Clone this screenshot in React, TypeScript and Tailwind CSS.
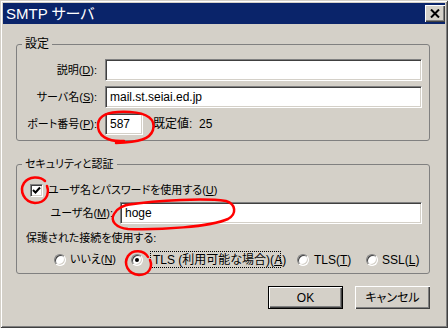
import type { ReactNode } from 'react'

const font = "font-['Liberation_Sans','Noto_Sans_CJK_JP',sans-serif] [font-feature-settings:'palt']"
const sunken =
  'border border-t-[#808080] border-l-[#808080] border-b-white border-r-white shadow-[inset_1px_1px_#404040,inset_-1px_-1px_#d4d0c8]'

function Key({ children }: { children: ReactNode }) {
  return <u className="underline underline-offset-[1px]">{children}</u>
}

function TextBox({ value, className = '' }: { value?: string; className?: string }) {
  return (
    <div className={`h-[22px] bg-white ${sunken} flex items-center pl-[4px] text-[12px] text-black ${className}`}>
      {value}
    </div>
  )
}

function Radio({ checked }: { checked?: boolean }) {
  return (
    <span className="relative w-[12px] h-[12px] rounded-full bg-white border border-t-[#808080] border-l-[#808080] border-b-white border-r-white shadow-[inset_1px_1px_#404040,inset_-1px_-1px_#d4d0c8] shrink-0 flex items-center justify-center">
      {checked && <span className="w-[4px] h-[4px] rounded-full bg-black" />}
    </span>
  )
}

function Btn({ children, primary }: { children: ReactNode; primary?: boolean }) {
  return (
    <button
      className={`w-[75px] h-[23px] bg-[#d4d0c8] text-[12px] text-black flex items-center justify-center ${
        primary
          ? 'border border-black shadow-[inset_1px_1px_#fff,inset_-1px_-1px_#404040,inset_-2px_-2px_#808080]'
          : 'shadow-[inset_1px_1px_#fff,inset_-1px_-1px_#404040,inset_-2px_-2px_#808080]'
      }`}
    >
      {children}
    </button>
  )
}

function Annotations() {
  return (
    <svg className="absolute inset-0 pointer-events-none" width="448" height="328" viewBox="0 0 448 328" fill="none">
      <g stroke="#ff0000" strokeWidth="2.5" strokeLinecap="round">
        <path d="M124 141 C108 142 97 136 98 124 C99 114 112 111 130 112 C147 113 156 119 153 130 C150 139 140 142 116 143" />
        <path d="M45 181 C40 176 29 176 24 183 C19 191 24 202 35 203 C45 203 50 195 47 186" />
        <path d="M126 205 C160 200 205 198 226 201 C236 204 237 214 228 219 C210 227 160 230 128 229 C116 228 110 221 114 214 C117 208 124 205 132 204" />
        <path d="M148 257 C144 250 133 249 128 256 C123 264 128 274 139 275 C149 275 153 267 150 260" />
      </g>
    </svg>
  )
}

export default function App() {
  return (
    <div
      className={`relative w-[448px] h-[328px] bg-[#d4d0c8] p-[3px] shadow-[inset_1px_1px_#d4d0c8,inset_-1px_-1px_#404040,inset_2px_2px_#fff,inset_-2px_-2px_#808080] ${font} text-black whitespace-nowrap`}
    >
      <div className="h-[21px] bg-[#0a246a] flex items-center justify-between pl-[3px]">
        <span className="text-white text-[15px] leading-none">SMTP サーバ</span>
        <button className="w-[20px] h-[17px] bg-[#d4d0c8] shadow-[inset_1px_1px_#fff,inset_-1px_-1px_#404040,inset_-2px_-2px_#808080] flex items-center justify-center">
          <svg width="10" height="9" viewBox="0 0 10 9">
            <path d="M1 0.5 L9 8.5 M9 0.5 L1 8.5" stroke="#000" strokeWidth="2" />
          </svg>
        </button>
      </div>

      <fieldset className="ml-[13px] mt-[13px] w-[414px] border border-[#808080] rounded-[3px] pr-[7px] pb-[5px] text-[11px]">
        <legend className="ml-[5px] px-[3px] text-[12px] leading-[14px]">設定</legend>
        <div className="grid grid-cols-[80px_1fr] gap-x-[8px] gap-y-[5px] pt-[8px]">
          <div className="flex items-center justify-end">
            説明(<Key>D</Key>):
          </div>
          <TextBox />
          <div className="flex items-center justify-end">
            サーバ名(<Key>S</Key>):
          </div>
          <TextBox value="mail.st.seiai.ed.jp" />
          <div className="flex items-center justify-end">
            ポート番号(<Key>P</Key>):
          </div>
          <div className="flex items-center gap-[10px]">
            <TextBox value="587" className="w-[38px]" />
            <span className="text-[12px]">既定値:&nbsp; 25</span>
          </div>
        </div>
      </fieldset>

      <fieldset className="ml-[13px] mt-[16px] w-[414px] border border-[#808080] rounded-[3px] pr-[7px] pb-[5px] text-[11px]">
        <legend className="ml-[5px] px-[3px] leading-[14px]">セキュリティと認証</legend>
        <div className="flex items-center h-[16px] mt-[11px] pl-[13px] gap-[5px]">
          <span className={`w-[13px] h-[13px] bg-white ${sunken} flex items-center justify-center shrink-0`}>
            <svg width="9" height="9" viewBox="0 0 9 9">
              <path d="M1 4 L3.5 6.5 L8 1.5" stroke="#000" strokeWidth="2" fill="none" />
            </svg>
          </span>
          <span>
            ユーザ名とパスワードを使用する(<Key>U</Key>)
          </span>
        </div>
        <div className="flex items-center mt-[4px]">
          <span className="w-[103px] text-right pr-[7px]">
            ユーザ名(<Key>M</Key>):
          </span>
          <TextBox value="hoge" className="flex-1" />
        </div>
        <div className="mt-[7px] ml-[9px] h-[14px] leading-[14px]">保護された接続を使用する:</div>
        <div className="flex items-center h-[17px] mt-[6px] pl-[37px]">
          <div className="w-[77px] flex items-center gap-[4px]">
            <Radio />
            <span>
              いいえ(<Key>N</Key>)
            </span>
          </div>
          <div className="w-[166px] flex items-center gap-[7px]">
            <Radio checked />
            <span className="h-[17px] w-[131px] border border-dotted border-black flex items-center pl-[2px] text-[12px]">
              TLS (利用可能な場合)(<Key>A</Key>)
            </span>
          </div>
          <div className="w-[69px] flex items-center gap-[5px] text-[12px]">
            <Radio />
            <span>
              TLS(<Key>T</Key>)
            </span>
          </div>
          <div className="flex items-center gap-[4px] text-[12px]">
            <Radio />
            <span>
              SSL(<Key>L</Key>)
            </span>
          </div>
        </div>
      </fieldset>

      <div className="flex justify-end gap-[12px] mt-[12px] mr-[15px]">
        <Btn primary>OK</Btn>
        <Btn>キャンセル</Btn>
      </div>

      <Annotations />
    </div>
  )
}
